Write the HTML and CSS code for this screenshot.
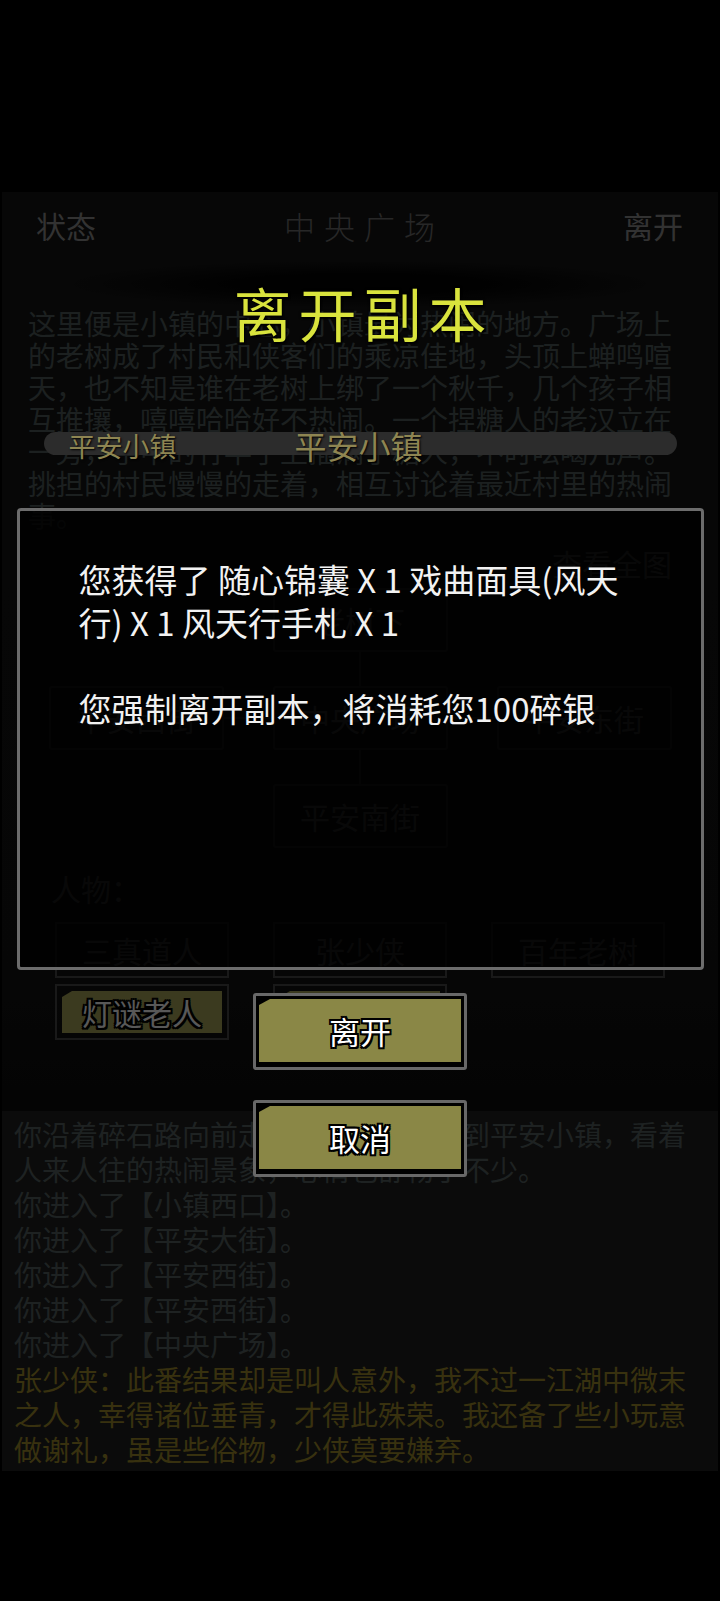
FILE: index.html
```html
<!DOCTYPE html>
<html lang="zh-CN">
<head>
    <meta charset="UTF-8">
    <meta name="viewport" content="width=device-width, initial-scale=1.0">
    <title>中央广场</title>
    <link rel="stylesheet" href="styles.css">
</head>
<body>
    <div class="screen">
        <div class="top-gap"></div>

        <div class="game">
            <div class="header">
                <span>状态</span>
                <span class="place">中央广场</span>
                <span>离开</span>
            </div>

            <div class="desc">这里便是小镇的中心，小镇最为热闹的地方。广场上的老树成了村民和侠客们的乘凉佳地，头顶上蝉鸣喧天，也不知是谁在老树上绑了一个秋千，几个孩子相互推攘，嘻嘻哈哈好不热闹。一个捏糖人的老汉立在一旁，手中的竹竿子上插满了糖人，不时吆喝几声。挑担的村民慢慢的走着，相互讨论着最近村里的热闹事。</div>

            <div class="map-link">查看全图</div>

            <div class="map">
                <div class="node n-north">老树下</div>
                <div class="link-v l-north"></div>
                <div class="node n-west">平安西街</div>
                <div class="link-h l-west"></div>
                <div class="node n-center">中央广场</div>
                <div class="link-h l-east"></div>
                <div class="node n-east">平安东街</div>
                <div class="link-v l-south"></div>
                <div class="node n-south">平安南街</div>
            </div>

            <div class="npc-label">人物：</div>
            <div class="npcs">
                <div class="npc plain">三真道人</div>
                <div class="npc plain">张少侠</div>
                <div class="npc plain">百年老树</div>
                <div class="npc"><span>灯谜老人</span></div>
                <div class="npc"><span>刘多儿</span></div>
            </div>

            <div class="spacer"></div>

            <div class="log">
                <p>你沿着碎石路向前走，没走多久便来到平安小镇，看着人来人往的热闹景象，心情也舒畅了不少。</p>
                <p>你进入了【小镇西口】。</p>
                <p>你进入了【平安大街】。</p>
                <p>你进入了【平安西街】。</p>
                <p>你进入了【平安西街】。</p>
                <p>你进入了【中央广场】。</p>
                <p class="talk">张少侠：此番结果却是叫人意外，我不过一江湖中微末之人，幸得诸位垂青，才得此殊荣。我还备了些小玩意做谢礼，虽是些俗物，少侠莫要嫌弃。</p>
            </div>
        </div>

        <div class="mask"></div>

        <div class="modal">
            <div class="modal-title">离开副本</div>
            <div class="route-bar">
                <span class="from">平安小镇</span>
                <span class="to">平安小镇</span>
            </div>
            <div class="modal-box">
                <p>您获得了 随心锦囊 X 1 戏曲面具(风天行) X 1 风天行手札 X 1</p>
                <p>您强制离开副本，将消耗您100碎银</p>
            </div>
            <button class="modal-btn"><span>离开</span></button>
            <button class="modal-btn second"><span>取消</span></button>
        </div>
    </div>
</body>
</html>
```

FILE: styles.css
```css
* {
    box-sizing: border-box;
}
html, body {
    margin: 0;
    padding: 0;
    background: #000;
}
body {
    font-family: "Noto Sans CJK SC", "Noto Sans", sans-serif;
    width: 720px;
    height: 1601px;
    overflow: hidden;
}
p {
    margin: 0;
}
.screen {
    position: relative;
    height: 1601px;
}
.top-gap {
    height: 192px;
}

/* game page underneath the popup */
.game {
    margin: 0 2px;
    height: 1279px;
    display: flex;
    flex-direction: column;
    background:
        radial-gradient(ellipse 70px 40px at 40px 1050px, #1e1e1e, transparent),
        radial-gradient(ellipse 60px 30px at 90px 1075px, #1a1a1a, transparent),
        radial-gradient(ellipse 110px 60px at 660px 1000px, #1b1b1b, transparent),
        radial-gradient(ellipse 130px 30px at 600px 1075px, #1e1e1e, transparent),
        linear-gradient(to bottom, #111 0, #0f0f0f 780px, #060606 1040px, #030303 1100px);
}
.header {
    height: 66px;
    display: flex;
    align-items: center;
    justify-content: space-between;
    padding: 0 35px 0 34px;
    color: #707070;
    font-size: 30px;
}
.header .place {
    font-size: 31px;
    font-weight: 300;
    letter-spacing: 9px;
    margin-right: -9px;
    color: #585858;
}
.desc {
    padding: 49px 32px 0 26px;
    font-size: 28px;
    line-height: 32px;
    color: #3e4848;
}
.map-link {
    margin-top: 16px;
    padding-right: 46px;
    text-align: right;
    font-size: 30px;
    line-height: 32px;
    color: #6a6a6a;
}
.map {
    margin-top: 9px;
    display: grid;
    grid-template-columns: 175px 49px 175px 49px 175px;
    grid-template-rows: 64px 34px 64px 34px 64px;
    justify-content: center;
}
.node {
    border: 2px solid #3a3a3a;
    border-radius: 3px;
    display: flex;
    align-items: center;
    justify-content: center;
    font-size: 30px;
    color: #6a6a6a;
}
.n-north { grid-area: 1 / 3; }
.l-north { grid-area: 2 / 3; }
.n-west { grid-area: 3 / 1; }
.l-west { grid-area: 3 / 2; }
.n-center { grid-area: 3 / 3; }
.l-east { grid-area: 3 / 4; }
.n-east { grid-area: 3 / 5; }
.l-south { grid-area: 4 / 3; }
.n-south { grid-area: 5 / 3; }
.link-v {
    width: 2px;
    justify-self: center;
    background: #3a3a3a;
}
.link-h {
    height: 2px;
    align-self: center;
    background: #3a3a3a;
}
.npc-label {
    margin-top: 24px;
    padding-left: 49px;
    font-size: 30px;
    line-height: 32px;
    color: #6a6a6a;
}
.npcs {
    margin-top: 18px;
    display: grid;
    grid-template-columns: repeat(3, 174px);
    grid-auto-rows: 56px;
    gap: 6px 44px;
    justify-content: center;
}
.npc {
    border: 2px solid #383838;
    padding: 5px 5px 5px;
    display: flex;
}
.npc span {
    flex: 1;
    display: flex;
    align-items: center;
    justify-content: center;
    background: #838045;
    clip-path: polygon(10px 0, 100% 0, 100% 100%, 0 100%, 0 6px);
    font-size: 30px;
    color: #c4c4c4;
    text-shadow: -2px -2px 0 #000, 2px -2px 0 #000, -2px 2px 0 #000, 2px 2px 0 #000,
                 0 -2px 0 #000, 0 2px 0 #000, -2px 0 0 #000, 2px 0 0 #000;
}
.npc.plain {
    align-items: center;
    justify-content: center;
    font-size: 30px;
    color: #6a6a6a;
}
.spacer {
    flex: 1;
}
.log {
    height: 360px;
    padding: 6px 24px 0 12px;
    background: #191919;
    font-size: 28px;
    line-height: 35px;
    color: #434d4d;
}
.log .talk {
    color: #7d6e22;
}

/* dim layer and popup */
.mask {
    position: absolute;
    inset: 0;
    background: rgba(0, 0, 0, 0.55);
}
.modal {
    position: absolute;
    inset: 0;
    display: flex;
    flex-direction: column;
    align-items: center;
    padding-top: 262px;
}
.modal-title {
    width: 608px;
    height: 85px;
    padding-top: 15px;
    text-align: center;
    font-size: 58px;
    line-height: 70px;
    font-weight: 400;
    letter-spacing: 7px;
    text-indent: 7px;
    color: #d9e33d;
    text-shadow: 0 0 3px #000, 1px 2px 2px #000;
    background: radial-gradient(ellipse 300px 24px at 50% 22px, rgba(0, 0, 0, 0.9) 40%, transparent 100%);
}
.route-bar {
    margin-top: 85px;
    width: 633px;
    height: 23px;
    border-radius: 12px;
    background: #2c2c2c;
    display: flex;
    align-items: center;
    padding-left: 25px;
    line-height: 23px;
    color: #8e8552;
    text-shadow: 1px 1px 2px #000;
}
.route-bar span {
    position: relative;
    top: 2px;
}
.route-bar .from {
    font-size: 27px;
}
.route-bar .to {
    margin-left: 118px;
    font-size: 32px;
}
.modal-box {
    margin-top: 53px;
    width: 687px;
    height: 462px;
    border: 3px solid #6c6c6c;
    border-radius: 4px;
    background: rgba(0, 0, 0, 0.82);
    padding: 47px 59px 0;
    font-size: 33px;
    line-height: 43px;
    color: #f2f2f2;
}
.modal-box p + p {
    margin-top: 43px;
}
.modal-btn {
    margin-top: 23px;
    width: 214px;
    height: 77px;
    border: 3px solid #686868;
    border-radius: 3px;
    background: #000;
    padding: 3px 3px 5px;
    display: flex;
    font-family: inherit;
}
.modal-btn.second {
    margin-top: 30px;
}
.modal-btn span {
    flex: 1;
    display: flex;
    align-items: center;
    justify-content: center;
    background: #8a8746;
    clip-path: polygon(11px 0, 100% 0, 100% 100%, 0 100%, 0 6px);
    font-size: 31px;
    font-weight: 400;
    color: #fff;
    text-shadow: -2px -2px 0 #000, 2px -2px 0 #000, -2px 2px 0 #000, 2px 2px 0 #000,
                 0 -2px 0 #000, 0 2px 0 #000, -2px 0 0 #000, 2px 0 0 #000;
}
```
